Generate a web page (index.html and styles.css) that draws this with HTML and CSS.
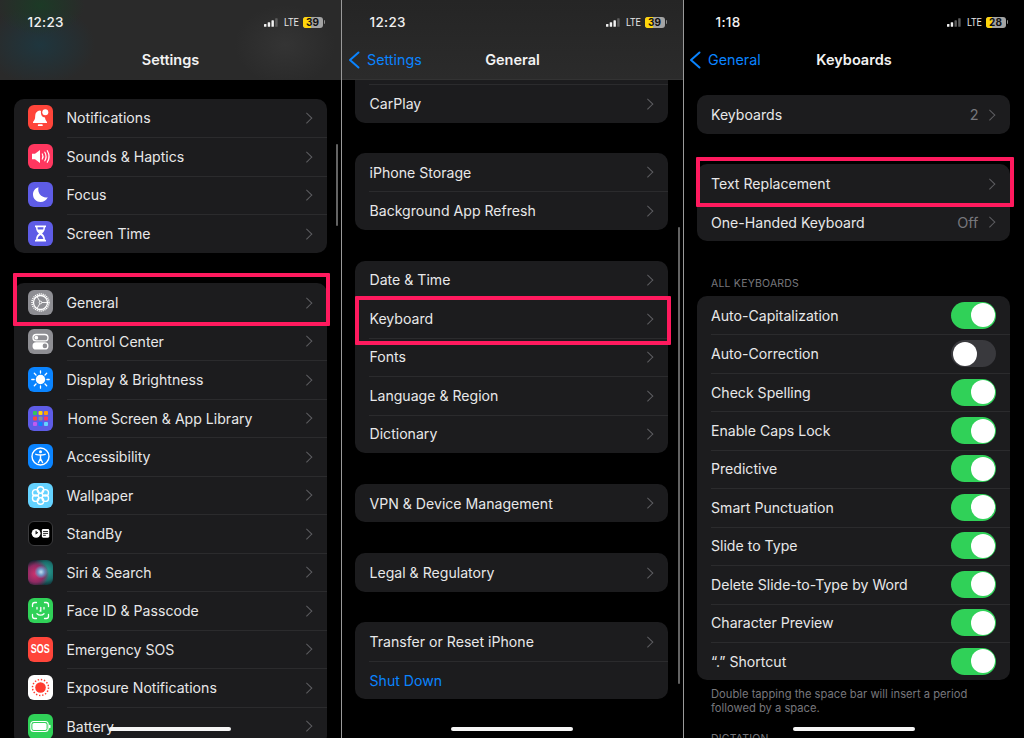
FILE: index.html
```html
<!DOCTYPE html>
<html lang="en">
<head>
<meta charset="utf-8">
<title>iPhone Settings</title>
<link rel="stylesheet" href="styles.css">
</head>
<body>
<div class="stage">

<section class="screen">
  <header class="bar bar-blur-a">
    <div class="status"><span class="time">12:23</span>
      <div class="sys"><svg class="sig" viewBox="0 0 15 9"><rect x="0" y="6" width="2.6" height="3" rx=".6"/><rect x="4" y="4.2" width="2.6" height="4.8" rx=".6"/><rect x="8" y="2.2" width="2.6" height="6.8" rx=".6"/><rect class="dim" x="12" y="0" width="2.6" height="9" rx=".6"/></svg><span class="lte"><span class="squeeze">LTE</span></span><span class="batt"><span class="fill f39"></span><b>39</b></span><i class="nub"></i></div>
    </div>
    <div class="nav"><span class="title">Settings</span></div>
  </header>
  <div class="scroll s1">
    <div class="card mb31">
      <div class="row"><span class="ic red"><svg viewBox="0 0 25 25"><path fill="#fff" d="M12 5.5c-3 .2-4.8 2.4-4.8 5.4 0 3-.8 4.3-2.2 6v1h14v-1c-1-1.2-1.8-2.3-2-4.4-2.6-.2-4.6-2.6-4-6.3-.3-.5-.6-.7-1-.7z"/><circle fill="#fff" cx="17.3" cy="7.3" r="3"/><rect fill="#fff" x="9.8" y="19.3" width="5" height="1.8" rx=".9"/></svg></span><span class="txt">Notifications</span><span class="chev"></span></div>
      <div class="row"><span class="ic pink"><svg viewBox="0 0 25 25"><path fill="#fff" d="M4 9.8h3L12 6v13l-5-3.8H4z"/><path fill="none" stroke="#fff" stroke-width="1.2" stroke-linecap="round" d="M14.3 10c1 1.7 1 3.3 0 5M16.8 8.2c1.7 2.9 1.7 5.7 0 8.6M19.3 6.7c2.3 3.8 2.3 7.8 0 11.6"/></svg></span><span class="txt">Sounds &amp; Haptics</span><span class="chev"></span></div>
      <div class="row"><span class="ic indigo"><svg viewBox="0 0 25 25"><path fill="#fff" d="M10.5 5.3C7 6.3 5 9.3 5 12.5c0 4.3 3.4 7.5 7.5 7.5 3.2 0 6-1.8 7.3-4.8-5.3 1.3-10.800-3.4-9.300-9.900z"/></svg></span><span class="txt">Focus</span><span class="chev"></span></div>
      <div class="row"><span class="ic indigo"><svg viewBox="0 0 25 25"><path fill="#fff" d="M7 4.5h11v1.8h-1c0 3.3-1.5 5-3 6.2 1.5 1.2 3 2.9 3 6.2h1v1.8H7v-1.8h1c0-3.3 1.5-5 3-6.2-1.5-1.2-3-2.9-3-6.2H7z"/><path fill="#5e5ce6" d="M9.5 6.3h6c0 .8-.2 1.5-.4 2.2H9.9c-.2-.7-.4-1.4-.4-2.2zM12.5 14c-1.3.8-2.6 2.2-2.9 4h5.8c-.3-1.8-1.6-3.2-2.9-4z"/></svg></span><span class="txt">Screen Time</span><span class="chev"></span></div>
    </div>
    <div class="card">
      <div class="row"><span class="ic gray"><svg viewBox="0 0 25 25"><circle cx="12.5" cy="12.5" r="8.5" fill="none" stroke="#fff" stroke-width="1.5" stroke-dasharray="1.1 .9"/><circle cx="12.5" cy="12.5" r="7" fill="none" stroke="#fff" stroke-width="1.3"/><path fill="none" stroke="#fff" stroke-width=".9" d="M12.5 12.5 9 6.5M12.5 12.5h6.800M12.5 12.5 9 18.5"/><circle cx="12.5" cy="12.5" r="1.3" fill="#8e8e93" stroke="#fff" stroke-width=".9"/></svg></span><span class="txt">General</span><span class="chev"></span></div>
      <div class="row"><span class="ic gray"><svg viewBox="0 0 25 25"><rect x="5" y="5.5" width="15" height="6.4" rx="3.2" fill="none" stroke="#fff" stroke-width="1.3"/><circle cx="8.3" cy="8.7" r="1.9" fill="#fff"/><rect x="4.5" y="13.3" width="16" height="7.2" rx="3.6" fill="#fff"/><circle cx="16.9" cy="16.9" r="2.3" fill="#8e8e93"/></svg></span><span class="txt">Control Center</span><span class="chev"></span></div>
      <div class="row"><span class="ic blue"><svg viewBox="0 0 25 25"><circle cx="12.5" cy="12.5" r="4.7" fill="#fff"/><path stroke="#fff" stroke-width="1.3" stroke-linecap="round" d="M12.5 3.8v2.3M12.5 18.9v2.3M3.8 12.5h2.3M18.9 12.5h2.3M6.3 6.3l1.7 1.7M17 17l1.7 1.7M18.7 6.3 17 8M8 17l-1.700 1.700"/></svg></span><span class="txt">Display &amp; Brightness</span><span class="chev"></span></div>
      <div class="row"><span class="ic violet"><svg viewBox="0 0 25 25"><rect x="5" y="5" width="4" height="4" rx="1" fill="#34c759"/><rect x="10.5" y="5" width="4" height="4" rx="1" fill="#ffd60a"/><rect x="16" y="5" width="4" height="4" rx="1" fill="#ff9f0a"/><rect x="5" y="10.5" width="4" height="4" rx="1" fill="#ff453a"/><rect x="10.5" y="10.5" width="4" height="4" rx="1" fill="#8e8e93"/><rect x="16" y="10.5" width="4" height="4" rx="1" fill="#ff375f"/><rect x="5" y="16" width="4" height="4" rx="1" fill="#bf5af2"/><rect x="10.5" y="16" width="4" height="4" rx="1" fill="#0a84ff"/><rect x="16" y="16" width="4" height="4" rx="1" fill="#64d2ff"/></svg></span><span class="txt txt-home">Home Screen &amp; App Library</span><span class="chev"></span></div>
      <div class="row"><span class="ic blue"><svg viewBox="0 0 25 25"><circle cx="12.5" cy="12.5" r="8.5" fill="none" stroke="#fff" stroke-width="1.4"/><circle cx="12.5" cy="7.8" r="1.5" fill="#fff"/><path fill="none" stroke="#fff" stroke-width="1.4" stroke-linecap="round" stroke-linejoin="round" d="M7.8 10.3c3.1.9 6.3.9 9.4 0M12.5 11v3.5M12.5 14.5l-2 4M12.5 14.5l2 4"/></svg></span><span class="txt">Accessibility</span><span class="chev"></span></div>
      <div class="row"><span class="ic sky"><svg viewBox="0 0 25 25" fill="none" stroke="#fff" stroke-width="1.4"><circle cx="12.5" cy="7" r="3.2"/><circle cx="12.5" cy="18" r="3.2"/><circle cx="7.7" cy="9.8" r="3.2"/><circle cx="17.3" cy="9.8" r="3.2"/><circle cx="7.7" cy="15.2" r="3.2"/><circle cx="17.3" cy="15.2" r="3.2"/></svg></span><span class="txt">Wallpaper</span><span class="chev"></span></div>
      <div class="row"><span class="ic black"><svg viewBox="0 0 25 25"><circle cx="7.7" cy="12.3" r="4.8" fill="#fff"/><path fill="none" stroke="#000" stroke-width="1.1" d="M7.7 9.5v3l2-1.2"/><rect x="14" y="7.6" width="8" height="9.4" rx="1.4" fill="#fff"/><path stroke="#000" stroke-width=".9" d="M15.3 10.3h5.4M15.3 12.4h5.4M15.3 14.5h3"/></svg></span><span class="txt">StandBy</span><span class="chev"></span></div>
      <div class="row"><span class="ic siri"></span><span class="txt">Siri &amp; Search</span><span class="chev"></span></div>
      <div class="row"><span class="ic green"><svg viewBox="0 0 25 25" fill="none" stroke="#fff" stroke-width="1.3" stroke-linecap="round"><path d="M4.5 8.5V6.8c0-1.3 1-2.3 2.3-2.3h1.7M16.5 4.5h1.7c1.3 0 2.3 1 2.3 2.3v1.7M20.5 16.5v1.7c0 1.3-1 2.3-2.3 2.3h-1.7M8.5 20.5H6.8c-1.3 0-2.3-1-2.3-2.3v-1.7M9 9.5v1.5M16 9.500v1.500M12.800 9.500v3.500h-.8M9 15.700c2 1.800 5 1.800 7 0"/></svg></span><span class="txt">Face ID &amp; Passcode</span><span class="chev"></span></div>
      <div class="row"><span class="ic red sos"><span class="sos-t">SOS</span></span><span class="txt">Emergency SOS</span><span class="chev"></span></div>
      <div class="row"><span class="ic white"><svg viewBox="0 0 25 25"><circle cx="12.5" cy="12.5" r="5.3" fill="#ff3b30"/><circle cx="12.5" cy="12.5" r="8" fill="none" stroke="#ff3b30" stroke-width="1.5" stroke-dasharray="1.4 1.75"/></svg></span><span class="txt">Exposure Notifications</span><span class="chev"></span></div>
      <div class="row"><span class="ic green"><svg viewBox="0 0 25 25"><rect x="2.8" y="7.5" width="17.4" height="10" rx="3" fill="none" stroke="#fff" stroke-width="1.1"/><rect x="4.4" y="9" width="14.2" height="7" rx="1.6" fill="#fff"/><rect x="21" y="10.8" width="1.5" height="3.4" rx=".7" fill="#fff"/></svg></span><span class="txt">Battery</span><span class="chev"></span></div>
    </div>
  </div>
  <div class="mark mark-general"></div>
  <div class="scrollbar sb1"></div>
  <div class="home"></div>
</section>

<section class="screen">
  <header class="bar bar-blur-b">
    <div class="status"><span class="time">12:23</span>
      <div class="sys"><svg class="sig" viewBox="0 0 15 9"><rect x="0" y="6" width="2.6" height="3" rx=".6"/><rect x="4" y="4.2" width="2.6" height="4.8" rx=".6"/><rect x="8" y="2.2" width="2.6" height="6.8" rx=".6"/><rect class="dim" x="12" y="0" width="2.6" height="9" rx=".6"/></svg><span class="lte"><span class="squeeze">LTE</span></span><span class="batt"><span class="fill f39"></span><b>39</b></span><i class="nub"></i></div>
    </div>
    <div class="nav"><a class="back"><svg viewBox="0 0 12 18"><path d="M10.5 1.5 2 9l8.5 7.5" fill="none" stroke="#0a84ff" stroke-width="2" stroke-linecap="round" stroke-linejoin="round"/></svg><span>Settings</span></a><span class="title">General</span></div>
  </header>
  <div class="scroll s2">
    <div class="card under-bar">
      <div class="row plain"></div>
      <div class="row plain"><span class="txt">CarPlay</span><span class="chev"></span></div>
    </div>
    <div class="card mb31">
      <div class="row plain"><span class="txt">iPhone Storage</span><span class="chev"></span></div>
      <div class="row plain"><span class="txt">Background App Refresh</span><span class="chev"></span></div>
    </div>
    <div class="card mb31">
      <div class="row plain"><span class="txt">Date &amp; Time</span><span class="chev"></span></div>
      <div class="row plain"><span class="txt">Keyboard</span><span class="chev"></span></div>
      <div class="row plain"><span class="txt">Fonts</span><span class="chev"></span></div>
      <div class="row plain"><span class="txt">Language &amp; Region</span><span class="chev"></span></div>
      <div class="row plain"><span class="txt">Dictionary</span><span class="chev"></span></div>
    </div>
    <div class="card mb31">
      <div class="row plain"><span class="txt">VPN &amp; Device Management</span><span class="chev"></span></div>
    </div>
    <div class="card mb31">
      <div class="row plain"><span class="txt">Legal &amp; Regulatory</span><span class="chev"></span></div>
    </div>
    <div class="card">
      <div class="row plain"><span class="txt">Transfer or Reset iPhone</span><span class="chev"></span></div>
      <div class="row plain"><span class="txt link">Shut Down</span></div>
    </div>
  </div>
  <div class="mark mark-keyboard"></div>
  <div class="scrollbar sb2"></div>
  <div class="home"></div>
</section>

<section class="screen">
  <header class="bar bar-none">
    <div class="status"><span class="time time-short">1:18</span>
      <div class="sys"><svg class="sig" viewBox="0 0 15 9"><rect x="0" y="6" width="2.6" height="3" rx=".6"/><rect x="4" y="4.2" width="2.6" height="4.8" rx=".6"/><rect class="dim" x="8" y="2.2" width="2.6" height="6.8" rx=".6"/><rect class="dim" x="12" y="0" width="2.6" height="9" rx=".6"/></svg><span class="lte"><span class="squeeze">LTE</span></span><span class="batt"><span class="fill f28"></span><b>28</b></span><i class="nub"></i></div>
    </div>
    <div class="nav"><a class="back"><svg viewBox="0 0 12 18"><path d="M10.5 1.5 2 9l8.5 7.5" fill="none" stroke="#0a84ff" stroke-width="2" stroke-linecap="round" stroke-linejoin="round"/></svg><span>General</span></a><span class="title">Keyboards</span></div>
  </header>
  <div class="scroll s3">
    <div class="card mb31">
      <div class="row plain"><span class="txt">Keyboards</span><span class="val">2</span><span class="chev"></span></div>
    </div>
    <div class="card">
      <div class="row plain"><span class="txt">Text Replacement</span><span class="chev"></span></div>
      <div class="row plain"><span class="txt">One-Handed Keyboard</span><span class="val">Off</span><span class="chev"></span></div>
    </div>
    <h2 class="sect">ALL KEYBOARDS</h2>
    <div class="card tight">
      <div class="row plain"><span class="txt">Auto-Capitalization</span><span class="tog on"></span></div>
      <div class="row plain"><span class="txt">Auto-Correction</span><span class="tog"></span></div>
      <div class="row plain"><span class="txt">Check Spelling</span><span class="tog on"></span></div>
      <div class="row plain"><span class="txt">Enable Caps Lock</span><span class="tog on"></span></div>
      <div class="row plain"><span class="txt">Predictive</span><span class="tog on"></span></div>
      <div class="row plain"><span class="txt">Smart Punctuation</span><span class="tog on"></span></div>
      <div class="row plain"><span class="txt">Slide to Type</span><span class="tog on"></span></div>
      <div class="row plain"><span class="txt">Delete Slide-to-Type by Word</span><span class="tog on"></span></div>
      <div class="row plain"><span class="txt">Character Preview</span><span class="tog on"></span></div>
      <div class="row plain"><span class="txt">“.” Shortcut</span><span class="tog on"></span></div>
    </div>
    <p class="foot">Double tapping the space bar will insert a period followed by a space.</p>
    <h2 class="sect sect-dict">DICTATION</h2>
  </div>
  <div class="mark mark-text"></div>
  <div class="home"></div>
</section>

</div>
</body>
</html>
```

FILE: styles.css
```css
* { box-sizing: border-box; }
html, body { margin: 0; height: 100%; background: #000; }
body { overflow: hidden; font-family: Inter, "Liberation Sans", sans-serif; color: #e6e6e7; }
.stage { display: flex; width: 1024px; height: 738px; background: #9a9a9a; gap: 1px; }
.screen { position: relative; flex: 0 0 341px; height: 738px; background: #000; overflow: hidden; display: flex; flex-direction: column; }
.screen:last-child { flex: 1 1 0; }

.bar { flex: 0 0 80px; display: flex; flex-direction: column; position: relative; z-index: 2; }
.bar-blur-a { background: radial-gradient(ellipse 45px 30px at 40px 5px, #1c3a26 0%, transparent 100%), radial-gradient(ellipse 55px 40px at 40px 45px, #1f363e 0%, transparent 100%), radial-gradient(ellipse 50px 40px at 285px 45px, #343434 0%, transparent 100%), #2a2a2a; }
.bar-blur-b { background: linear-gradient(#252525, #2b2b2b); border-bottom: 1px solid #333; }
.bar-none { background: #000; }

.status { height: 44px; padding: 11px 16px 0 27.5px; display: flex; justify-content: space-between; align-items: flex-start; }
.time { font-size: 13.5px; font-weight: 500; line-height: 22px; color: #f0f0f0; letter-spacing: .3px; }
.time-short { margin-left: 4px; }
.sys { display: flex; align-items: center; height: 22px; }
.sig { width: 14px; height: 9px; fill: #f2f2f2; margin-right: 6px; }
.sig .dim { fill: #5d5d5d; }
.lte { display: block; width: 15px; margin-right: 4px; font-size: 11.5px; color: #e6e6e6; }
.squeeze { display: inline-block; font-family: Roboto, "Liberation Sans", sans-serif; transform: scaleX(.8); transform-origin: left center; letter-spacing: .2px; }
.batt { position: relative; width: 20px; height: 11px; border-radius: 3px; background: #a4a4a4; overflow: hidden; display: flex; align-items: center; justify-content: center; }
.batt b { position: relative; font-size: 10px; font-weight: 700; color: #111; }
.fill { position: absolute; left: 0; top: 0; bottom: 0; background: #ffd60a; }
.f39 { width: 8px; }
.f28 { width: 6px; }
.nub { width: 1.5px; height: 4px; background: #8d8d8d; border-radius: 0 1px 1px 0; margin-left: 1px; }

.nav { position: relative; height: 31px; display: flex; align-items: center; justify-content: center; }
.title { font-size: 14.5px; font-weight: 600; color: #f2f2f2; }
.back { position: absolute; left: 6px; top: 3.5px; display: flex; align-items: center; gap: 7px; color: #0a84ff; font-size: 14.3px; line-height: 24px; }
.bar-none .back { left: 5px; }
.back svg { width: 12px; height: 18px; }

.scroll { flex: 1; padding: 0 14px; overflow: hidden; }
.s1 { padding-top: 18.5px; }
.s2 { padding: 0 15px 0 13px; }
.s3 { padding-top: 15px; padding-right: 14px; padding-left: 13px; }

.card { background: #1c1c1e; border-radius: 10px; overflow: hidden; }
.under-bar { margin: -34.5px 0 30.25px; }
.mb31 { margin-bottom: 30.75px; }

.row { position: relative; height: 38.5px; display: flex; align-items: center; padding: 0 15px 0 14px; font-size: 14.1px; color: #e8e8e9; }
.s2 .row { padding-left: 14.5px; }
.tight .row { height: 38.45px; }
.row + .row::before { content: ""; position: absolute; top: 0; right: 0; left: 52.5px; height: 1px; background: #2b2b2d; }
.row.plain + .row.plain::before { left: 14px; }
.txt { flex: 1; white-space: nowrap; }
.txt-home { margin-left: 1px; }
.link { color: #0a84ff; }
.val { color: #77777c; margin-right: 7px; font-size: 14.5px; }

.ic { flex: 0 0 25px; width: 25px; height: 25px; border-radius: 6px; margin-right: 13.5px; display: flex; align-items: center; justify-content: center; }
.ic svg { width: 25px; height: 25px; display: block; }
.red { background: #ff453a; }
.pink { background: #ff375f; }
.indigo { background: #5e5ce6; }
.gray { background: #8e8e93; }
.blue { background: #0a84ff; }
.violet { background: #5e5ce6; }
.sky { background: #64d2ff; }
.black { background: #000; border: 1px solid #3a3a3c; }
.green { background: #30d158; }
.white { background: #fff; }
.siri { background: radial-gradient(circle at 52% 48%, #c4e2f2 0%, #6f93c4 18%, transparent 36%), radial-gradient(circle at 30% 55%, #d0336f 0%, #8e2a63 38%, transparent 62%), radial-gradient(circle at 72% 45%, #27a79a 0%, #1b6f6c 40%, transparent 66%), #10222c; }
.sos { color: #fff; font-family: "Liberation Sans", sans-serif; font-size: 12.5px; font-weight: 700; overflow: hidden; }
.sos-t { display: inline-block; transform: scaleX(.72); letter-spacing: 0; }

.chev { flex: 0 0 7.5px; width: 7.5px; height: 7.5px; border-top: 1.8px solid #5e5e62; border-right: 1.8px solid #5e5e62; transform: rotate(45deg); margin-right: 2px; }

.tog { flex: 0 0 45px; width: 45px; height: 27px; border-radius: 14px; background: #39393d; position: relative; margin-right: -1px; }
.tog::after { content: ""; position: absolute; top: 1.5px; left: 1.5px; width: 24px; height: 24px; border-radius: 50%; background: #fff; }
.tog.on { background: #30d158; }
.tog.on::after { left: auto; right: 1.5px; }

.sect { margin: 35.25px 14px 6.5px; font-size: 10.5px; font-weight: 400; color: #77777c; line-height: 13px; letter-spacing: .2px; }
.foot { margin: 8px 14px 0; font-size: 11.2px; line-height: 13.5px; color: #77777c; width: 290px; }
.sect-dict { margin-top: 17px; }

.mark { position: absolute; border: 4px solid #ff1a5e; border-radius: 1px; z-index: 3; pointer-events: none; }
.mark-general { left: 13px; top: 273px; width: 317px; height: 53px; }
.mark-keyboard { left: 13px; top: 296px; width: 316px; height: 49px; }
.mark-text { left: 12px; top: 157px; width: 318px; height: 50px; }

.scrollbar { position: absolute; right: 3px; width: 2.5px; border-radius: 2px; background: #636363; z-index: 2; }
.sb1 { top: 144px; height: 82px; }
.sb2 { top: 227px; height: 457px; }

.home { position: absolute; left: 109px; bottom: 7px; width: 122px; height: 4px; border-radius: 2px; background: #f6f6f6; z-index: 4; }
```
